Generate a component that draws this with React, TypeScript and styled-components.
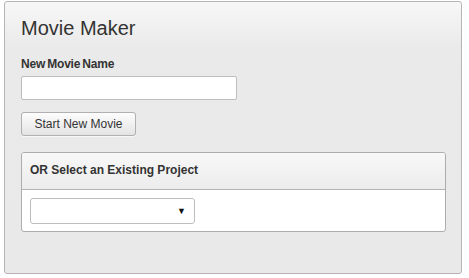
import React from "react";
import styled, { createGlobalStyle } from "styled-components";

const GlobalStyle = createGlobalStyle`
  html, body {
    margin: 0;
    padding: 0;
    background: #fff;
    font-family: "Liberation Sans", Arial, sans-serif;
    color: #333;
  }
`;

const Panel = styled.div`
  box-sizing: border-box;
  margin: 1px 0 0 4px;
  width: 458px;
  height: 273px;
  padding: 14px 16px 0 16px;
  border: 1px solid #b5b5b5;
  border-radius: 3px;
  background: linear-gradient(to bottom, #f7f7f7 0px, #eaeaea 45px, #e9e9e9 100%);
  display: flex;
  flex-direction: column;
`;

const Title = styled.h1`
  margin: 0;
  font-size: 20px;
  line-height: 24px;
  font-weight: normal;
  color: #333;
`;

const Label = styled.label`
  margin-top: 17px;
  font-size: 12px;
  line-height: 15px;
  font-weight: bold;
  color: #333;
  letter-spacing: -0.2px;
  word-spacing: -1px;
`;

const TextInput = styled.input`
  box-sizing: border-box;
  margin-top: 4px;
  width: 216px;
  height: 24px;
  border: 1px solid #bdbdbd;
  border-radius: 2px;
  background: #fff;
  padding: 0 6px;
  font: 12px "Liberation Sans", Arial, sans-serif;
  outline: none;
`;

const Button = styled.button`
  box-sizing: border-box;
  align-self: flex-start;
  margin-top: 12px;
  width: 115px;
  height: 24px;
  padding: 0;
  border: 1px solid #b0b0b0;
  border-radius: 3px;
  background: linear-gradient(to bottom, #fdfdfd, #e4e4e4);
  box-shadow: 0 1px 0 rgba(255, 255, 255, 0.6);
  font: 12px "Liberation Sans", Arial, sans-serif;
  color: #333;
  cursor: pointer;
`;

const Section = styled.div`
  box-sizing: border-box;
  margin-top: 16px;
  width: 425px;
  border: 1px solid #adadad;
  border-radius: 3px;
  background: #fff;
  overflow: hidden;
`;

const SectionHeader = styled.div`
  box-sizing: border-box;
  height: 37px;
  padding: 10px 8px 0;
  border-bottom: 1px solid #b5b5b5;
  background: linear-gradient(to bottom, #f8f8f8, #ececec);
  font-size: 12px;
  line-height: 15px;
  font-weight: bold;
  color: #333;
`;

const SectionBody = styled.div`
  padding: 8px 8px 7px;
`;

const SelectBox = styled.div`
  box-sizing: border-box;
  width: 165px;
  height: 26px;
  border: 1px solid #bdbdbd;
  border-radius: 3px;
  background: #fff;
  display: flex;
  align-items: center;
  justify-content: flex-end;
  padding-right: 8px;
`;

const Arrow = styled.span`
  font-size: 9px;
  line-height: 9px;
  color: #111;
`;

export default function App() {
  return (
    <>
      <GlobalStyle />
      <Panel>
        <Title>Movie Maker</Title>
        <Label htmlFor="movie-name">New Movie Name</Label>
        <TextInput id="movie-name" type="text" />
        <Button>Start New Movie</Button>
        <Section>
          <SectionHeader>OR Select an Existing Project</SectionHeader>
          <SectionBody>
            <SelectBox>
              <Arrow>▼</Arrow>
            </SelectBox>
          </SectionBody>
        </Section>
      </Panel>
    </>
  );
}
